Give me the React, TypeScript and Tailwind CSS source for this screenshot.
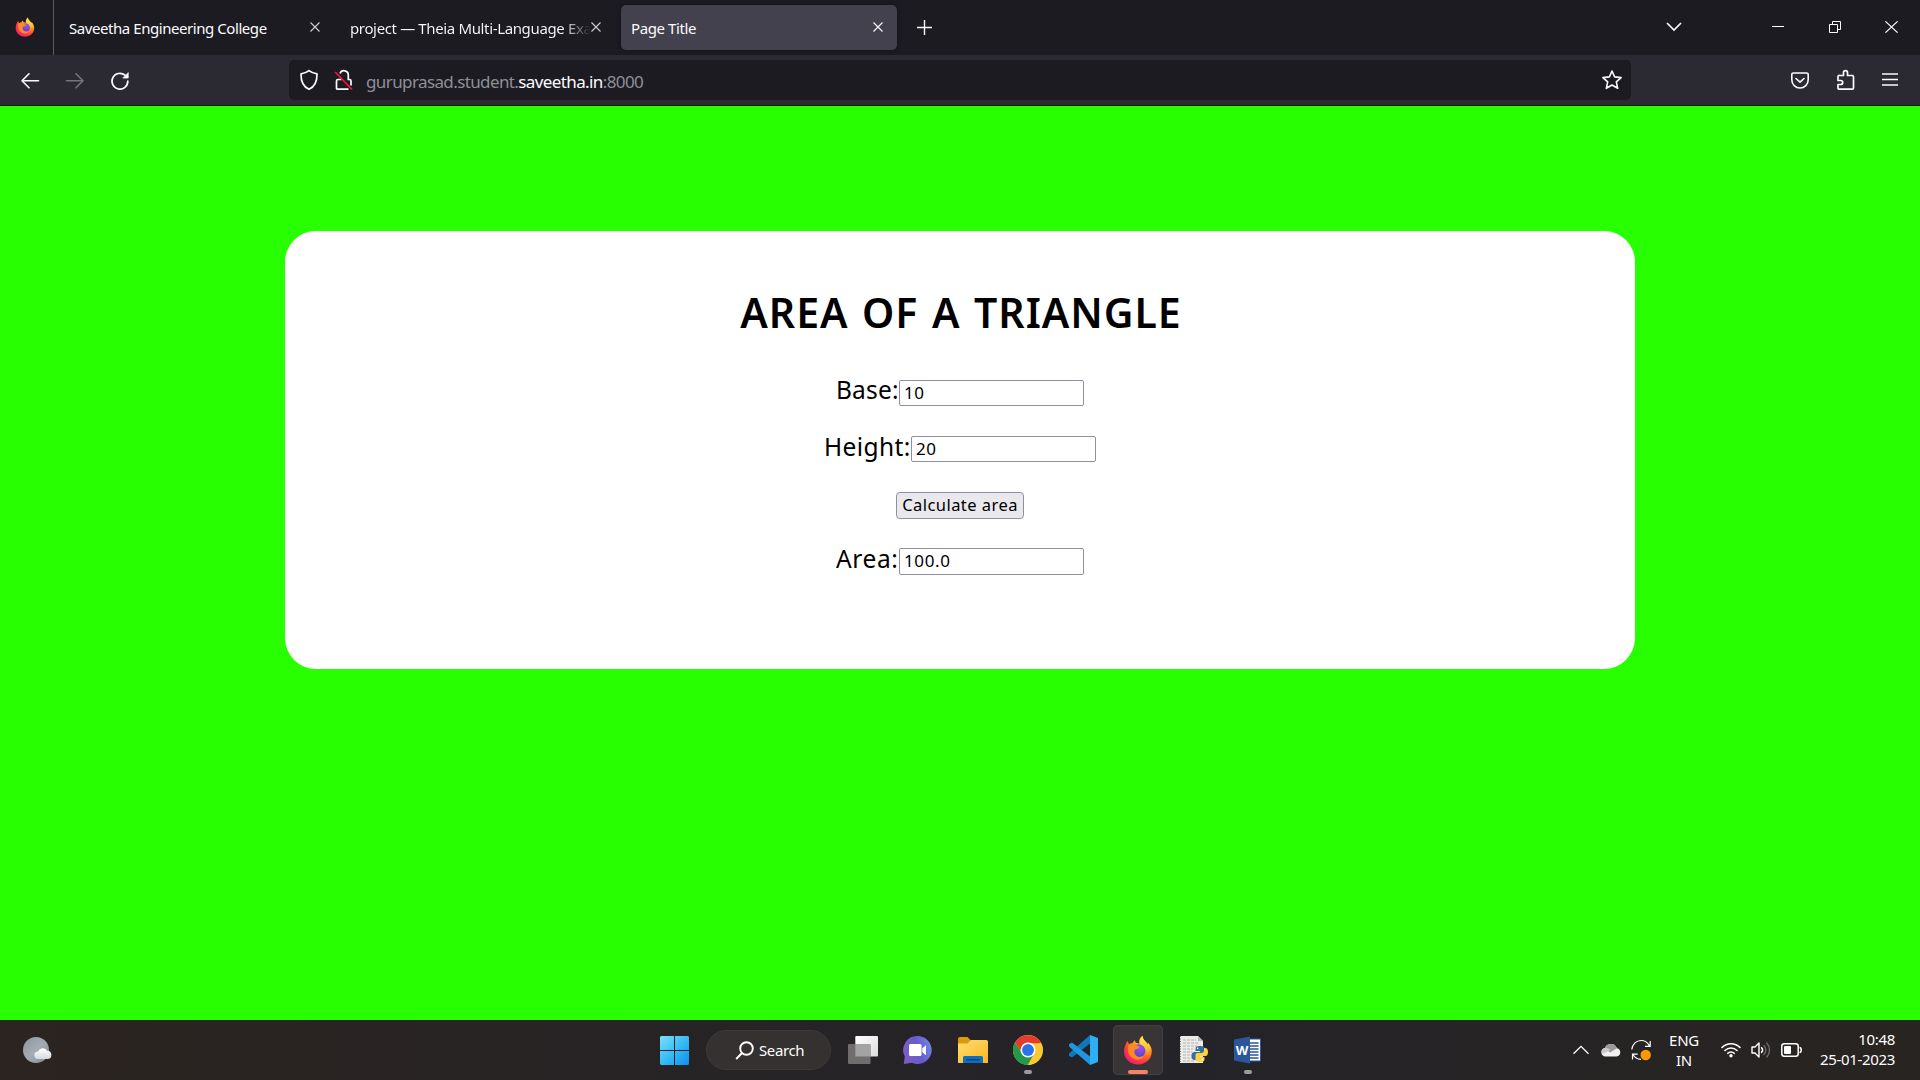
import React from "react";

type IconProps = { className?: string };

function FirefoxIcon({ className }: IconProps) {
  return (
    <svg className={className} viewBox="0 0 30 30">
      <defs>
        <radialGradient id="ffBody" cx="78%" cy="12%" r="105%">
          <stop offset="0" stopColor="#fff44f" />
          <stop offset=".3" stopColor="#ffc02e" />
          <stop offset=".52" stopColor="#ff7a1f" />
          <stop offset=".75" stopColor="#ff3647" />
          <stop offset="1" stopColor="#e31587" />
        </radialGradient>
        <radialGradient id="ffGlobe" cx="60%" cy="25%" r="80%">
          <stop offset="0" stopColor="#a04ff0" />
          <stop offset=".6" stopColor="#6f48dc" />
          <stop offset="1" stopColor="#5a3bc4" />
        </radialGradient>
        <linearGradient id="ffFlame" x1="0" y1="0" x2="0" y2="1">
          <stop offset="0" stopColor="#fff44f" />
          <stop offset="1" stopColor="#ff9a22" stopOpacity=".4" />
        </linearGradient>
      </defs>
      <path d="M4.600 6c.3 1.500.9 2.400 1.800 3 1-.7 2-1 3.200-1.100C10.200 6.600 11 5.800 12 5.200c0 1 .3 2 .9 2.600 1.200.3 2.300.4 3.400 1C15.600 5.500 17 2.500 19.400.8c.2 2.500 1.400 4 3.100 5.600 1 .9 1.700 2 2.200 3.100V7.400c2.600 2.400 4.100 5.700 4.100 9.100C28.800 24 22.600 29.500 15 29.500S1 23.700 1 16.400c0-2.700.7-5.200 1.900-7.300C3.200 8 3.800 6.900 4.600 6z" fill="url(#ffBody)" />
      <circle cx="15.800" cy="15.800" r="6.600" fill="url(#ffGlobe)" />
      <path d="M5 11c2-2.200 5-2.600 7.600-2 .8 1.800 2.700 2 3.900 2.500-.2 1.800-2 2.400-4 2.700-1 1-1.500 2.600-.8 4.300 1.200 3 4.500 4 7 3 1-.3 1.500-.3 2 .1-1.600 2.500-4.700 3.600-8 2.800C8 23.300 5 19 5 15z" fill="#ff8a1f" />
      <path d="M19.400.8c.2 2.500 1.400 4 3.100 5.600 4 3.600 4.800 9.500 2 14 .4-4.400-1.300-7.800-4.700-9.900-2.200-1.500-2.300-6.600-.4-9.700z" fill="url(#ffFlame)" />
    </svg>
  );
}

function CloseX({ className }: IconProps) {
  return (
    <svg className={className} viewBox="0 0 10 10" fill="none" stroke="currentColor" strokeWidth="1.100">
      <path d="M.5.500l9 9M9.500.500l-9 9" />
    </svg>
  );
}

function TabStrip() {
  return (
    <div className="flex h-[55px] items-start bg-[#1c1b22] text-[15px] text-[#fbfbfe]">
      <div className="flex h-[55px] w-[54px] shrink-0 items-center justify-center border-r border-[#5b5a60] pr-[3px]">
        <FirefoxIcon className="h-5 w-5 -translate-y-px" />
      </div>
      <div className="flex h-[55px] w-[281px] items-center pt-px pl-[15px]">
        <span className="w-[241px] whitespace-nowrap tracking-[-0.44px]">Saveetha Engineering College</span>
        <CloseX className="mb-[2px] h-[10px] w-[10px] text-[#cfcfd3]" />
      </div>
      <div className="flex h-[55px] w-[286px] items-center pt-px pl-[15px]">
        <span className="w-[241px] overflow-hidden whitespace-nowrap bg-linear-to-r from-[#fbfbfe] from-88% to-transparent bg-clip-text tracking-[-0.36px] text-transparent">
          project — Theia Multi-Language Example
        </span>
        <CloseX className="mb-[2px] h-[10px] w-[10px] shrink-0 text-[#cfcfd3]" />
      </div>
      <div className="mt-[5px] flex h-[45px] w-[276px] items-center rounded-[5px] bg-[#42414d] pt-px pr-[14px] pl-[10px] shadow-[0_0_4px_rgba(0,0,0,0.4)]">
        <span className="flex-1 tracking-[-0.4px]">Page Title</span>
        <CloseX className="mb-[2px] h-[10px] w-[10px] text-[#fbfbfe]" />
      </div>
      <svg className="mt-5 ml-5 h-[15px] w-[15px]" viewBox="0 0 15 15" fill="none" stroke="currentColor" strokeWidth="1.400">
        <path d="M7.500 0v15M0 7.500h15" />
      </svg>
      <div className="flex-1" />
      <svg className="mt-[22px] h-[10px] w-4" viewBox="0 0 16 10" fill="none" stroke="currentColor" strokeWidth="1.700">
        <path d="M1 1l7 7 7-7" />
      </svg>
      <svg className="mt-5 ml-[90px] h-3 w-3" viewBox="0 0 12 12" stroke="white">
        <path d="M0 6.500h12" />
      </svg>
      <svg className="mt-[21px] ml-[45px] h-3 w-3" viewBox="0 0 12 12" fill="none" stroke="white">
        <path d="M.5 3.500h8v8h-8zM3.500 3.500v-3h8v8h-3" />
      </svg>
      <svg className="mt-[21px] mr-[22px] ml-11 h-3 w-[13px]" viewBox="0 0 13 12" fill="none" stroke="white" strokeWidth="1.100">
        <path d="M.4.300l12.200 11.400M12.600.300L.4 11.700" />
      </svg>
    </div>
  );
}

function Toolbar() {
  return (
    <div className="flex h-[51px] items-start border-b border-[#0c0c0d] bg-[#2b2a33] text-[#fbfbfe]">
      <svg className="mt-[17px] ml-5 h-[18px] w-5" viewBox="0 0 20 18" fill="none" stroke="currentColor" strokeWidth="1.600" strokeLinecap="round" strokeLinejoin="round">
        <path d="M18.500 8.800H2M9 1.800l-7 7 7 7" />
      </svg>
      <svg className="mt-[17px] ml-[25px] h-[18px] w-5 text-[#75747b]" viewBox="0 0 20 18" fill="none" stroke="currentColor" strokeWidth="1.600" strokeLinecap="round" strokeLinejoin="round">
        <path d="M1.500 8.800H18M11 1.800l7 7-7 7" />
      </svg>
      <svg className="mt-4 ml-[25px] h-5 w-5" viewBox="0 0 20 20" fill="none" stroke="currentColor" strokeWidth="1.700" strokeLinecap="round">
        <path d="M17.800 10A7.900 7.900 0 1 1 15 4.200" />
        <path d="M18.200 2v5h-5z" fill="currentColor" strokeWidth=".8" strokeLinejoin="round" />
      </svg>
      <div className="mt-[5px] ml-[159px] flex h-10 w-[1342px] items-center rounded-[5px] bg-[#1c1b22]">
        <svg className="ml-[10px] h-[22px] w-5" viewBox="0 0 20 22" fill="none" stroke="currentColor" strokeWidth="1.700" strokeLinejoin="round">
          <path d="M10 1.700c2.300 1.800 4.800 2.800 8 3.200.1 6-1.700 12.500-8 15.400C3.700 17.400 1.900 10.900 2 4.900c3.200-.4 5.700-1.400 8-3.200z" />
        </svg>
        <svg className="ml-[15px] h-[22px] w-5" viewBox="0 0 20 22" fill="none" stroke="currentColor" strokeWidth="1.700">
          <path d="M6 4.500a4.300 4.300 0 0 1 8.300 1.800v4.200h1.200a1.500 1.500 0 0 1 1.500 1.500v4.500M14.500 20.200h-11a1 1 0 0 1-1-1V12a1.500 1.500 0 0 1 1.500-1.500h3.500" />
          <path d="M1.200 3l16.800 17.500" stroke="#f5123f" strokeWidth="1.800" />
        </svg>
        <span className="ml-3 flex-1 whitespace-nowrap pt-[3px] text-[17px] tracking-[-0.61px] text-[#8f8f96]">
          guruprasad.student.<span className="text-[#fbfbfe]">saveetha.in</span>:8000
        </span>
        <svg className="mr-2 h-[22px] w-[22px]" viewBox="0 0 22 22" fill="none" stroke="currentColor" strokeWidth="1.600" strokeLinejoin="round">
          <path d="M11 2l2.600 5.900 6.500.7-4.800 4.300 1.400 6.400L11 16l-5.700 3.300 1.400-6.400-4.800-4.300 6.500-.7z" />
        </svg>
      </div>
      <div className="flex-1" />
      <svg className="mt-[17px] h-[17px] w-[18px]" viewBox="0 0 18 17" fill="none" stroke="currentColor" strokeWidth="1.600" strokeLinecap="round" strokeLinejoin="round">
        <path d="M2.500 1h13A1.600 1.600 0 0 1 17.200 2.600v5.200a8.200 8.200 0 0 1-16.400 0V2.600A1.600 1.600 0 0 1 2.500 1zM5 6.500l4 3.700 4-3.700" />
      </svg>
      <svg className="mt-[14px] ml-[27px] h-[22px] w-5" viewBox="0 0 20 22" fill="none" stroke="currentColor" strokeWidth="1.700" strokeLinejoin="round">
        <path d="M3.700 6.500H7.500V3.600a2 2 0 0 1 4 0v2.900h4.800A1.200 1.200 0 0 1 17.500 7.700V19a1.200 1.200 0 0 1-1.200 1.200H3.200A1.200 1.200 0 0 1 2 19v-3.500h2.700a2 2 0 0 0 0-4H2V7.700a1.200 1.200 0 0 1 1.700-1.200z" />
      </svg>
      <svg className="mt-[18px] mr-[22px] ml-[26px] h-[13px] w-4" viewBox="0 0 16 13" fill="none" stroke="currentColor" strokeWidth="1.500">
        <path d="M0 1h16M0 6.500h16M0 12h16" />
      </svg>
    </div>
  );
}

function Field({ label, value, className }: { label: string; value: string; className: string }) {
  return (
    <div className={"flex h-[27px] items-start " + className}>
      <span className="w-0 flex-1 whitespace-nowrap text-[24.500px] leading-[20px]">{label}</span>
      <input
        readOnly
        defaultValue={value}
        className="h-[26px] w-[185px] shrink-0 rounded-[2px] border border-[#8f8f9d] bg-white px-1 pb-[2px] text-[17px] leading-none tracking-[0.6px] outline-none"
      />
    </div>
  );
}

function PageBody() {
  return (
    <main className="flex h-[914px] justify-center bg-[#28ff00] pt-[125px] text-black">
      <section className="flex h-[438px] w-[1350px] flex-col items-center rounded-[31px] bg-white">
        <h1 className="mt-[53px] h-[56px] whitespace-nowrap pl-[2px] text-[41px] leading-[56px] font-semibold tracking-[0.95px] [word-spacing:2px]">AREA OF A TRIANGLE</h1>
        <Field label="Base:" value="10" className="mt-10 w-[248px] tracking-[0.2px]" />
        <Field label="Height:" value="20" className="mt-[29px] w-[272px] tracking-[0.4px] [&>span]:pt-px" />
        <button className="mt-[29px] h-[27px] w-[128px] whitespace-nowrap rounded-[4px] border border-[#8f8f9d] bg-[#e9e9ed] pb-[2px] text-[16.500px] leading-[20px] tracking-[0.45px]">
          Calculate area
        </button>
        <Field label="Area:" value="100.0" className="mt-[29px] w-[248px] tracking-[0.6px] [&>input]:h-[27px] [&>span]:pt-px" />
      </section>
    </main>
  );
}

function AppSlot({ children, mark }: { children: React.ReactNode; mark?: "idle" | "active" }) {
  return (
    <div
      className={
        "mr-[5px] flex h-[50px] w-[50px] shrink-0 flex-col items-center rounded-[5px] pt-[10px] " +
        (mark === "active" ? "bg-[#393537] shadow-[inset_0_0_0_1px_#454143]" : "")
      }
    >
      <div className="h-[30px] w-[30px]">{children}</div>
      {mark === "idle" && <div className="mt-[5px] h-1 w-2 rounded-full bg-[#9b9a9b]" />}
      {mark === "active" && <div className="mt-[5px] h-1 w-5 rounded-full bg-[#f4836a]" />}
    </div>
  );
}

function Taskbar() {
  return (
    <footer className="flex h-[60px] items-start bg-linear-to-r from-[#2b2420] via-[#242328] via-58% to-[#282421] text-white">
      <svg className="mt-4 ml-[22px] h-7 w-[30px]" viewBox="0 0 30 28">
        <defs>
          <linearGradient id="moon" x1="0" y1="0" x2="1" y2="1">
            <stop offset="0" stopColor="#8d979f" />
            <stop offset=".5" stopColor="#a4abb2" />
            <stop offset="1" stopColor="#7f8993" />
          </linearGradient>
          <linearGradient id="mist" x1="0" y1="0" x2="0" y2="1">
            <stop offset="0" stopColor="#fff" />
            <stop offset="1" stopColor="#d3dae2" />
          </linearGradient>
        </defs>
        <circle cx="14" cy="14" r="13" fill="url(#moon)" />
        <path d="M16 23a3.700 3.700 0 0 1 0-7.400 5 5 0 0 1 9-.8 4.100 4.100 0 0 1 .5 8.200z" fill="url(#mist)" />
      </svg>
      <svg className="mt-4 ml-[608px] h-[29px] w-[29px]" viewBox="0 0 29 29">
        <defs>
          <linearGradient id="win" x1="0" y1="0" x2="1" y2="1">
            <stop offset="0" stopColor="#7be0fc" />
            <stop offset=".5" stopColor="#38bdf5" />
            <stop offset="1" stopColor="#0a8ff2" />
          </linearGradient>
        </defs>
        <path d="M1 0h13v14H0V1zM15 0h13l1 1v13H15zM0 15h14v14H1l-1-1zM15 15h14v13l-1 1H15z" fill="url(#win)" />
      </svg>
      <div className="mt-[10px] ml-[17px] flex h-10 w-[125px] items-center rounded-full border border-[#3e3a39] bg-[#343130] pl-7 text-[15px]">
        <svg className="h-[19px] w-[19px]" viewBox="0 0 19 19" fill="none" stroke="currentColor" strokeWidth="1.900">
          <circle cx="11.500" cy="7.500" r="6.300" />
          <path d="M7 12L1.200 18" />
        </svg>
        <span className="ml-[5px] pt-px tracking-[-0.4px]">Search</span>
      </div>
      <div className="mt-[5px] ml-[7px] flex">
        <AppSlot>
          <svg viewBox="0 0 30 30">
            <defs>
              <linearGradient id="pane" x1="0" y1="0" x2="1" y2="1">
                <stop offset="0" stopColor="#fff" />
                <stop offset="1" stopColor="#dcdcdc" />
              </linearGradient>
            </defs>
            <rect x="7.300" y="1" width="22.700" height="20.500" rx="1" fill="url(#pane)" />
            <rect x="0" y="9" width="22.500" height="20" rx="1" fill="#6f6e6d" />
            <path d="M7.300 9h15.200v12.500H7.300z" fill="#a3a3a3" />
          </svg>
        </AppSlot>
        <AppSlot>
          <svg viewBox="0 0 30 30">
            <defs>
              <linearGradient id="chat" x1="0" y1=".5" x2="1" y2=".2">
                <stop offset="0" stopColor="#7c5fc0" />
                <stop offset=".5" stopColor="#665bce" />
                <stop offset="1" stopColor="#7389e2" />
              </linearGradient>
            </defs>
            <path d="M15 1a14 14 0 1 1-6 26.800L.8 29l1-7.500A14 14 0 0 1 15 1z" fill="url(#chat)" />
            <rect x="6" y="9" width="12.500" height="12" rx="1.500" fill="#fff" />
            <path d="M19.300 13.200l3.700-3v10l-3.700-3z" fill="#fff" />
          </svg>
        </AppSlot>
        <AppSlot>
          <svg viewBox="0 0 30 30">
            <defs>
              <linearGradient id="folder" x1="0" y1="0" x2="1" y2="1">
                <stop offset="0" stopColor="#ffdc72" />
                <stop offset="1" stopColor="#fbb81f" />
              </linearGradient>
            </defs>
            <path d="M0 4a2 2 0 0 1 2-2h7.500l3 3H27a3 3 0 0 1 3 3v5H0z" fill="#dc9a0b" />
            <path d="M0 8.500h9.500L13 5h15a2 2 0 0 1 2 2v21H0z" fill="url(#folder)" />
            <path d="M5 28v-5.500A1.500 1.500 0 0 1 6.500 21h17a1.500 1.500 0 0 1 1.500 1.500V28z" fill="#0e6fc0" />
            <rect x="8" y="24" width="14" height="1.500" rx=".7" fill="#07467f" />
          </svg>
        </AppSlot>
        <AppSlot mark="idle">
          <svg viewBox="0 0 48 48">
            <circle cx="24" cy="24" r="24" fill="#fcc934" />
            <path d="M3.200 12A24 24 0 0 0 24 48l10-18.500-10 4-9.500-4z" fill="#249a48" />
            <path d="M24 13h20.800A24 24 0 0 1 24 48l10-18z" fill="#fcc934" />
            <path d="M3.200 12A24 24 0 0 1 44.800 13H24a11 11 0 0 0-9.500 16.500z" fill="#e33b2e" />
            <circle cx="24" cy="24" r="12" fill="#fff" />
            <circle cx="24" cy="24" r="9.500" fill="#2b74e8" />
          </svg>
        </AppSlot>
        <AppSlot>
          <svg viewBox="0 0 30 30">
            <path d="M1 18.500L22 0v8.500L4 22.600 1 20.800z" fill="#0f78bd" />
            <path d="M1 11.500L22 30v-8.500L4 7.400 1 9.200z" fill="#1f96dd" />
            <path d="M22 0v30l8-3V3z" fill="#2cb0f3" />
          </svg>
        </AppSlot>
        <AppSlot mark="active">
          <FirefoxIcon className="h-[30px] w-[30px]" />
        </AppSlot>
        <AppSlot>
          <svg viewBox="0 0 30 30">
            <path d="M2 1h18l5 5v22H2z" fill="#ecebe8" />
            <path d="M20 1v5h5z" fill="#b8b8b6" />
            <path d="M5 5h13M5 8h16M5 11h14M5 14h10M5 17h9M5 20h9M5 23h9M5 26h12" stroke="#b3b3b3" strokeWidth="1" strokeDasharray="3 1" />
            <path d="M2.500 1v27" stroke="#77736f" strokeDasharray="1 1.500" />
            <path d="M22 11c-3 0-4 1-4 2.500V16h4.500v1H17c-2 0-3 1.500-3 4s1 4 3 4h1.500v-2.500c0-1.500 1-2.500 2.500-2.500h4.500c1.200 0 2-1 2-2v-4.500C27.500 12 26 11 22 11z" transform="translate(-.5 0)" fill="#356f9f" />
            <path d="M22.500 27c3 0 4-1 4-2.500V22H22v-1h5.500c1.500 0 2.500-1.500 2.500-4s-1-4-2.500-4H26v2.500c0 1.500-1 2.500-2.500 2.500H19.500c-1.500 0-2 1-2 2v4.500c0 1.500 2 2.500 5 2.500z" fill="#fdd13f" />
            <circle cx="19.600" cy="13.400" r=".8" fill="#fff" />
            <circle cx="24.300" cy="24.500" r=".8" fill="#fff" />
          </svg>
        </AppSlot>
        <AppSlot mark="idle">
          <svg viewBox="0 0 30 30">
            <path d="M14 4h13.500v22H14z" fill="#fff" stroke="#2b569a" strokeWidth="1" />
            <path d="M17 8h8.500M17 11h8.500M17 14h8.500M17 17h8.500M17 20h8.500M17 23h8.500" stroke="#2b569a" strokeWidth="1.400" />
            <path d="M1 4.500L17 1.500v27L1 25.500z" fill="#2b569a" />
            <text x="9" y="20" textAnchor="middle" fontSize="13" fontWeight="700" fill="#fff" fontFamily="Open Sans, sans-serif">W</text>
          </svg>
        </AppSlot>
      </div>
      <div className="flex-1" />
      <svg className="mt-[25px] h-[10px] w-4" viewBox="0 0 16 10" fill="none" stroke="white" strokeWidth="1.300">
        <path d="M.5 8.800L8 1.300l7.500 7.500" />
      </svg>
      <svg className="mt-[23px] ml-3 h-[14px] w-5" viewBox="0 0 20 14">
        <path d="M4.500 13.500a4.300 4.300 0 0 1-.7-8.500A6.500 6.500 0 0 1 15.900 5.200a4.200 4.200 0 0 1-.4 8.300z" fill="#f1f1f1" />
        <path d="M3.800 5A6.500 6.500 0 0 1 15.900 5.200L9 9.500z" fill="#9a9a9a" />
        <path d="M4.500 5c2-.3 3.600.8 5 1.800L3 10.500l-2.700-.7C.3 7 2 5.200 4.500 5z" fill="#c9c9c9" />
      </svg>
      <svg className="mt-[19px] ml-[10px] h-[22px] w-[21px]" viewBox="0 0 21 22" fill="none" stroke="white" strokeWidth="1.200">
        <path d="M.8 10.500C1.500 5 5.500 1.500 10 1.500c4 0 6.800 2 8.500 5.500M19.200 2v5.300h-5.200M1.500 20.500v-5.300h5.200M2 15.500c1.600 3 4.300 4.700 8 4.800" />
        <circle cx="14.700" cy="16" r="5.200" fill="#ff9800" stroke="none" />
      </svg>
      <div className="mt-[10px] ml-[15px] w-[34px] text-center text-[15px] leading-5 tracking-[-0.3px]">
        <div>ENG</div>
        <div>IN</div>
      </div>
      <svg className="mt-[21px] ml-5 h-[17px] w-5" viewBox="0 0 20 17" fill="none" stroke="white" strokeWidth="1.600" strokeLinecap="round">
        <path d="M1 6.500a12.600 12.600 0 0 1 18 0M4 9.500a8.500 8.500 0 0 1 12 0M6.800 12.300a4.500 4.500 0 0 1 6.400 0" />
        <circle cx="10" cy="14.800" r="1.700" fill="white" stroke="none" />
      </svg>
      <svg className="mt-[21px] ml-[10px] h-[18px] w-5" viewBox="0 0 20 18" fill="none" stroke="white" strokeWidth="1.400" strokeLinejoin="round">
        <path d="M1 6v6h3l4 4V2L4 6z" />
        <path d="M10.500 6.500a3.700 3.700 0 0 1 0 5" strokeLinecap="round" />
        <path d="M13 4.500a6.500 6.500 0 0 1 0 9M15.800 2a10.500 10.500 0 0 1 0 14" stroke="#6e6c6b" strokeLinecap="round" />
      </svg>
      <svg className="mt-[23px] ml-[10px] h-[14px] w-[21px]" viewBox="0 0 21 14" fill="none" stroke="white" strokeWidth="1.500">
        <rect x=".8" y=".8" width="16.400" height="12.400" rx="2.500" />
        <rect x="3" y="3" width="7" height="8" rx="1" fill="white" stroke="none" />
        <path d="M18.500 4.500c1.500 0 1.700.8 1.700 2.500s-.2 2.500-1.700 2.500" />
      </svg>
      <div className="mt-[9px] mr-[25px] w-[93px] whitespace-nowrap text-right text-[15px] leading-5 tracking-[-0.33px]">
        <div>10:48</div>
        <div>25-01-2023</div>
      </div>
    </footer>
  );
}

export default function App() {
  return (
    <div className="flex h-[1080px] w-[1920px] flex-col overflow-hidden font-['Noto_Sans','Open_Sans',sans-serif]">
      <TabStrip />
      <Toolbar />
      <PageBody />
      <Taskbar />
    </div>
  );
}
